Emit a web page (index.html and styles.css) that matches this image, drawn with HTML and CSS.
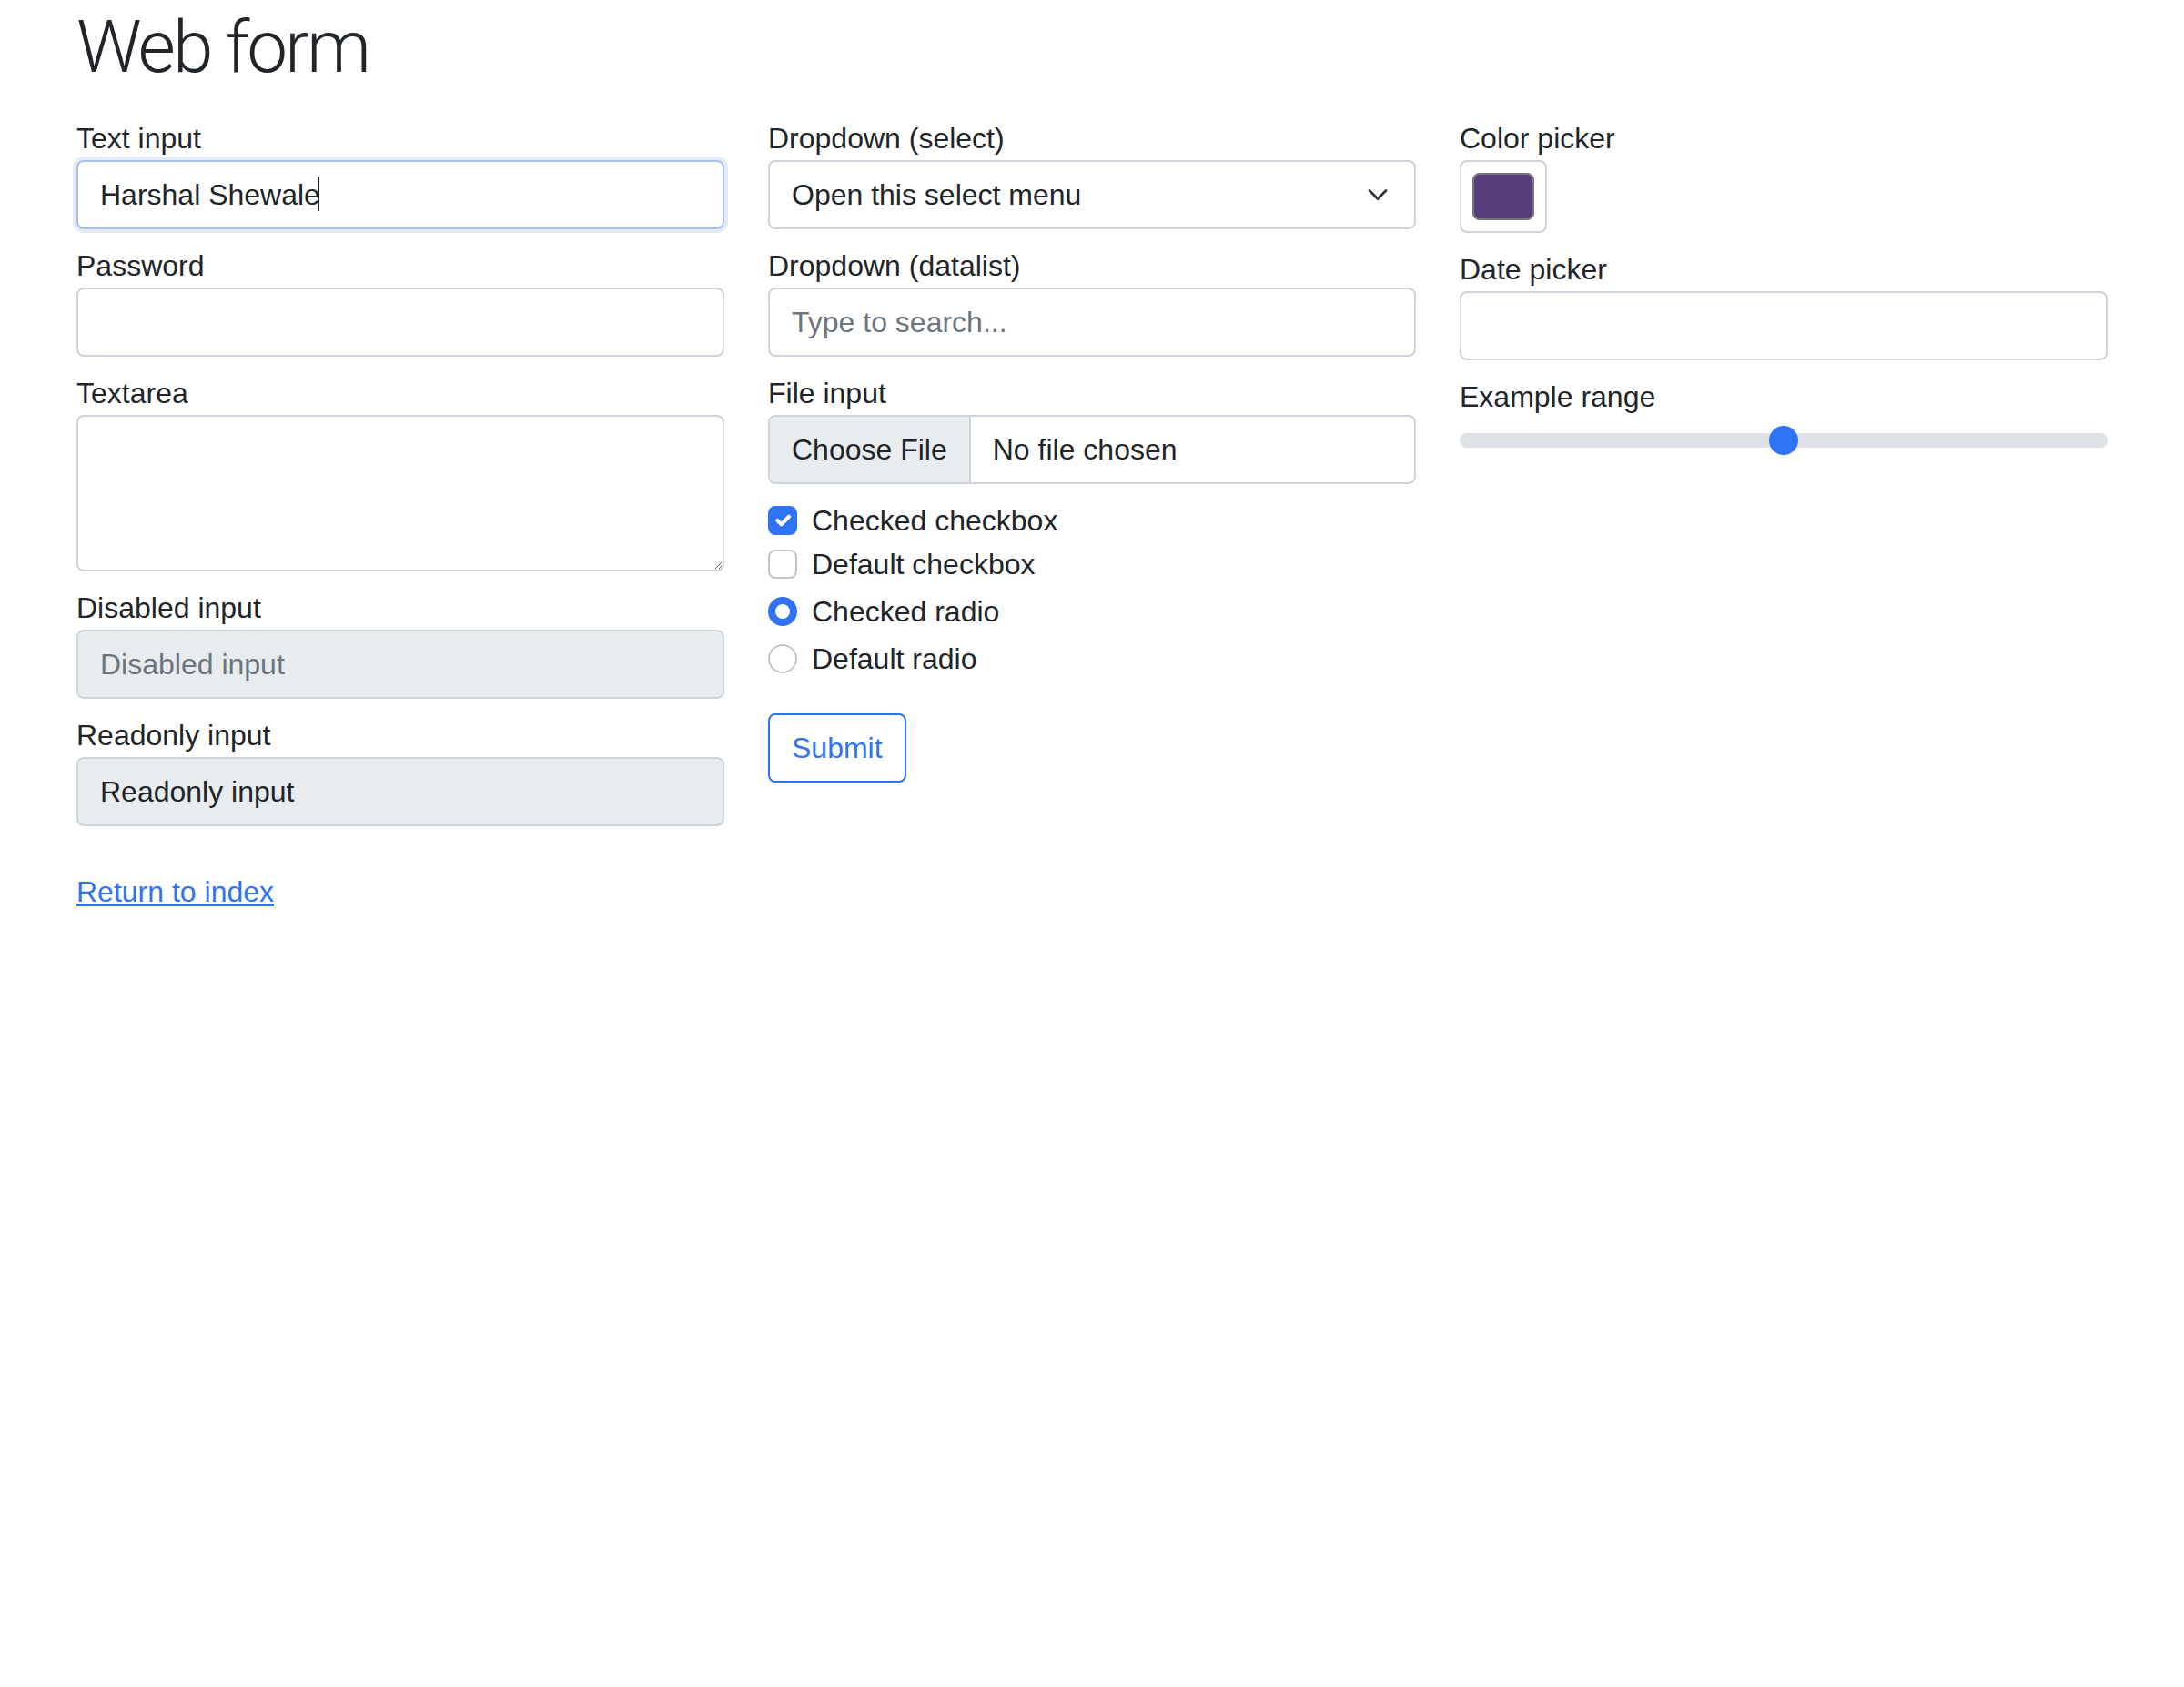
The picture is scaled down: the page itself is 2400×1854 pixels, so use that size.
FILE: index.html
```html
<!DOCTYPE html>
<html lang="en">
<head>
<meta charset="utf-8">
<title>Web form</title>
<link rel="stylesheet" href="styles.css">
</head>
<body>
<div class="container">
  <h1 class="page-title">Web form</h1>
  <form class="form-grid" action="#" method="get">
    <div class="form-col">
      <label class="field">
        <span class="field-label">Text input</span>
        <span class="input-wrap">
          <input class="control is-focused" type="text" name="my-text" value="Harshal Shewale">
          <span class="caret"></span>
        </span>
      </label>
      <label class="field">
        <span class="field-label">Password</span>
        <input class="control" type="password" name="my-password">
      </label>
      <label class="field">
        <span class="field-label">Textarea</span>
        <textarea class="control control-area" name="my-textarea" rows="3"></textarea>
      </label>
      <label class="field">
        <span class="field-label">Disabled input</span>
        <input class="control control-muted" type="text" name="my-disabled" placeholder="Disabled input" disabled>
      </label>
      <label class="field">
        <span class="field-label">Readonly input</span>
        <input class="control control-muted" type="text" name="my-readonly" value="Readonly input" readonly>
      </label>
      <a class="back-link" href="#">Return to index</a>
    </div>

    <div class="form-col">
      <label class="field">
        <span class="field-label">Dropdown (select)</span>
        <span class="input-wrap">
          <select class="control control-select" name="my-select">
            <option selected>Open this select menu</option>
            <option>One</option>
            <option>Two</option>
            <option>Three</option>
          </select>
          <svg class="select-arrow" width="32" height="24" viewBox="0 0 16 16" aria-hidden="true"><path d="M2 5l6 6 6-6" fill="none" stroke="#343a40" stroke-width="2" stroke-linecap="round" stroke-linejoin="round"/></svg>
        </span>
      </label>
      <label class="field">
        <span class="field-label">Dropdown (datalist)</span>
        <input class="control" type="text" name="my-datalist" placeholder="Type to search...">
      </label>
      <label class="field">
        <span class="field-label">File input</span>
        <span class="control file-control">
          <span class="file-btn">Choose File</span>
          <span class="file-name">No file chosen</span>
        </span>
      </label>

      <div class="check check-first">
        <span class="check-box is-checked"><svg width="28" height="28" viewBox="0 0 20 20" aria-hidden="true"><path d="m6 10 3 3 6-6" fill="none" stroke="#fff" stroke-width="3" stroke-linecap="round" stroke-linejoin="round"/></svg></span>
        <span class="check-text">Checked checkbox</span>
      </div>
      <div class="check">
        <span class="check-box"></span>
        <span class="check-text">Default checkbox</span>
      </div>
      <div class="check">
        <span class="check-box radio is-checked"></span>
        <span class="check-text">Checked radio</span>
      </div>
      <div class="check">
        <span class="check-box radio"></span>
        <span class="check-text">Default radio</span>
      </div>

      <button class="btn-submit" type="submit">Submit</button>
    </div>

    <div class="form-col">
      <div class="field">
        <span class="field-label">Color picker</span>
        <span class="color-control"><span class="color-swatch"></span></span>
      </div>
      <label class="field">
        <span class="field-label">Date picker</span>
        <input class="control" type="text" name="my-date">
      </label>
      <label class="field">
        <span class="field-label">Example range</span>
        <input class="range" type="range" name="my-range" min="0" max="10" step="1" value="5">
      </label>
    </div>
  </form>
</div>
</body>
</html>
```

FILE: styles.css
```css
* {
  box-sizing: border-box;
}

body {
  margin: 0;
  background: #ffffff;
  color: #212529;
  font-family: "Liberation Sans", Arial, sans-serif;
  font-size: 32px;
  line-height: 48px;
}

.container {
  width: 2280px;
  margin: 0 auto;
  padding: 0 24px;
}

.page-title {
  margin: 0 0 12px;
  padding-top: 4px;
  font-family: Roboto, "Liberation Sans", sans-serif;
  font-weight: 300;
  font-size: 80px;
  line-height: 96px;
  letter-spacing: -3px;
}

.form-grid {
  display: grid;
  grid-template-columns: repeat(3, 1fr);
  column-gap: 48px;
  margin: 0;
}

.form-col {
  padding: 16px 0;
  min-width: 0;
}

.field {
  display: block;
  margin-bottom: 16px;
}

.field-label {
  display: block;
  height: 48px;
}

.input-wrap {
  position: relative;
  display: block;
}

.control {
  display: block;
  width: 100%;
  height: 76px;
  margin: 0;
  padding: 12px 24px;
  font-family: inherit;
  font-size: 32px;
  line-height: 48px;
  color: #212529;
  background: #ffffff;
  border: 2px solid #ced4da;
  border-radius: 8px;
  outline: none;
}

.control::placeholder {
  color: #6c757d;
  opacity: 1;
}

.is-focused {
  border-color: #a9c2ea;
  box-shadow: 0 0 0 4px #e3ebf8;
}

.caret {
  position: absolute;
  left: 265px;
  top: 18px;
  width: 2px;
  height: 38px;
  background: #212529;
  pointer-events: none;
}

.control-area {
  height: 172px;
  resize: vertical;
}

.control-muted {
  background: #e9ecef;
}

.control-select {
  appearance: none;
  -webkit-appearance: none;
  padding-right: 72px;
}

.select-arrow {
  position: absolute;
  right: 26px;
  top: 50%;
  margin-top: -12px;
  pointer-events: none;
}

.file-control {
  display: flex;
  padding: 0;
  overflow: hidden;
}

.file-btn {
  padding: 12px 24px;
  background: #e9ecef;
  border-right: 2px solid #ced4da;
  white-space: nowrap;
}

.file-name {
  padding: 12px 24px;
  white-space: nowrap;
}

.check {
  display: flex;
  align-items: flex-start;
  gap: 16px;
  min-height: 48px;
  margin-bottom: 4px;
}

.check-first {
  margin-bottom: 0;
}

.check-box {
  flex: none;
  display: flex;
  align-items: center;
  justify-content: center;
  width: 32px;
  height: 32px;
  margin-top: 8px;
  background: #ffffff;
  border: 2px solid #c4c4c4;
  border-radius: 8px;
}

.check-box.is-checked {
  background: #2f72f5;
  border-color: #2f72f5;
}

.check-box.radio {
  border-radius: 50%;
}

.check-box.radio.is-checked {
  background: #ffffff;
  border: 8px solid #2f72f5;
}

.btn-submit {
  display: inline-block;
  margin-top: 32px;
  padding: 12px 24px;
  font-family: inherit;
  font-size: 32px;
  line-height: 48px;
  color: #2f72f5;
  background: #ffffff;
  border: 2px solid #2f72f5;
  border-radius: 8px;
  cursor: pointer;
}

.back-link {
  display: inline-block;
  margin-top: 32px;
  color: #2f72f5;
  text-decoration: underline;
}

.color-control {
  display: block;
  width: 96px;
  height: 80px;
  padding: 12px;
  border: 2px solid #ced4da;
  border-radius: 8px;
  background: #ffffff;
}

.color-swatch {
  display: block;
  width: 100%;
  height: 100%;
  background: #563d7c;
  border: 2px solid #777777;
  border-radius: 8px;
}

.range {
  display: block;
  width: 100%;
  height: 48px;
  margin: 0;
  padding: 0;
  background: transparent;
  appearance: none;
  -webkit-appearance: none;
}

.range::-webkit-slider-runnable-track {
  height: 16px;
  background: #dee2e6;
  border-radius: 16px;
}

.range::-webkit-slider-thumb {
  -webkit-appearance: none;
  appearance: none;
  width: 32px;
  height: 32px;
  margin-top: -8px;
  background: #2f72f5;
  border: 0;
  border-radius: 50%;
}
```
